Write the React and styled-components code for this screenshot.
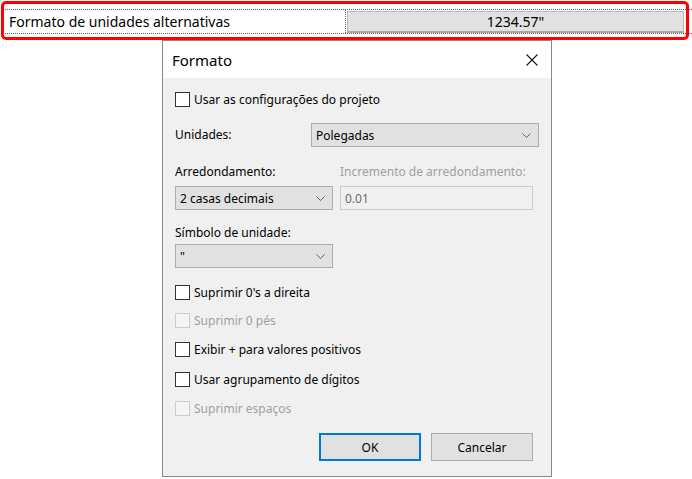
import React from 'react'
import styled, { createGlobalStyle } from 'styled-components'

const Global = createGlobalStyle`
  body {
    margin: 0;
    background: #ffffff;
    font-family: "Noto Sans", "Open Sans", sans-serif;
    color: #000000;
  }
`

const Top = styled.div`
  position: relative;
  height: 40px;
  padding-top: 9px;
  box-sizing: border-box;
`

const GridRow = styled.div`
  display: flex;
  margin-left: 5px;
  height: 25px;
  box-sizing: border-box;
  border-top: 1px dotted #606060;
  border-bottom: 1px dotted #606060;
`

const NameCell = styled.div`
  width: 341px;
  box-sizing: border-box;
  border-right: 1px dotted #606060;
  padding-left: 4px;
  display: flex;
  align-items: center;
  font-size: 14px;
  white-space: nowrap;
`

const ValueBox = styled.div`
  margin: 1px 0 0 1px;
  width: 337px;
  box-sizing: border-box;
  background: #e1e1e1;
  border: 1px solid #b8b8b8;
  border-bottom: 2px solid #a8a8a8;
  display: flex;
  align-items: center;
  justify-content: center;
  font-size: 14px;
`

const Highlight = styled.div`
  position: absolute;
  left: 1px;
  top: 1px;
  width: 688px;
  height: 39px;
  box-sizing: border-box;
  border: 3px solid #ff0000;
  border-radius: 5px;
  pointer-events: none;
`

const Dialog = styled.div`
  margin-left: 162px;
  width: 390px;
  height: 437px;
  box-sizing: border-box;
  border: 1px solid #868686;
  background: #f0f0f0;
  display: flex;
  flex-direction: column;
  font-size: 12px;
`

const TitleBar = styled.div`
  height: 37px;
  background: #ffffff;
  display: flex;
  align-items: center;
  justify-content: space-between;
  padding: 0 13px 0 9px;
  font-size: 15px;
`

const Body = styled.div`
  flex: 1;
  padding: 0 12px 0 12px;
  display: flex;
  flex-direction: column;
`

const Check = styled.label`
  display: flex;
  align-items: center;
  gap: 4px;
  height: 15px;
  margin-top: ${(p) => p.$top}px;
  color: ${(p) => (p.$disabled ? '#a0a0a0' : '#000000')};
  white-space: nowrap;
`

const Box = styled.span`
  width: 15px;
  height: 15px;
  box-sizing: border-box;
  border: 1px solid ${(p) => (p.$disabled ? '#cccccc' : '#333333')};
  background: ${(p) => (p.$disabled ? '#f4f4f4' : '#ffffff')};
  flex: none;
`

const FieldRow = styled.div`
  display: flex;
  align-items: center;
  justify-content: space-between;
  margin-top: ${(p) => p.$top}px;
`

const Columns = styled.div`
  display: grid;
  grid-template-columns: 158px 193px;
  column-gap: 7px;
  align-items: center;
  margin-top: ${(p) => p.$top}px;
`

const Label = styled.div`
  height: 16px;
  line-height: 16px;
  margin-top: ${(p) => p.$top || 0}px;
  color: ${(p) => (p.$disabled ? '#a0a0a0' : '#000000')};
  white-space: nowrap;
`

const Select = styled.div`
  width: ${(p) => p.$width}px;
  height: 24px;
  box-sizing: border-box;
  background: #e1e1e1;
  border: 1px solid #adadad;
  display: flex;
  align-items: center;
  justify-content: space-between;
  padding: 0 7px 0 4px;
  margin-top: ${(p) => p.$top || 0}px;
`

const Input = styled.div`
  height: 24px;
  box-sizing: border-box;
  background: #f0f0f0;
  border: 1px solid #cccccc;
  color: #6d6d6d;
  display: flex;
  align-items: center;
  padding-left: 4px;
`

const Buttons = styled.div`
  display: flex;
  justify-content: flex-end;
  gap: 10px;
  margin-top: 17px;
  padding-right: 6px;
`

const Button = styled.div`
  width: 102px;
  height: 28px;
  box-sizing: border-box;
  background: #e1e1e1;
  border: ${(p) => (p.$primary ? '2px solid #0078d7' : '1px solid #adadad')};
  display: flex;
  align-items: center;
  justify-content: center;
`

const Chevron = () => (
  <svg width="9" height="5" viewBox="0 0 9 5">
    <polyline points="0.5,0.5 4.5,4.5 8.5,0.5" fill="none" stroke="#606060" strokeWidth="1" />
  </svg>
)

const CloseIcon = () => (
  <svg width="12" height="12" viewBox="0 0 12 12">
    <path d="M0.5 0.5 L11.5 11.5 M11.5 0.5 L0.5 11.5" stroke="#1a1a1a" strokeWidth="1.1" fill="none" />
  </svg>
)

function CheckOption({ top, disabled, children }) {
  return (
    <Check $top={top} $disabled={disabled}>
      <Box $disabled={disabled} />
      {children}
    </Check>
  )
}

export default function App() {
  return (
    <>
      <Global />
      <Top>
        <GridRow>
          <NameCell>Formato de unidades alternativas</NameCell>
          <ValueBox>1234.57"</ValueBox>
        </GridRow>
        <Highlight />
      </Top>
      <Dialog>
        <TitleBar>
          <span>Formato</span>
          <CloseIcon />
        </TitleBar>
        <Body>
          <CheckOption top={14}>Usar as configurações do projeto</CheckOption>
          <FieldRow $top={16}>
            <Label>Unidades:</Label>
            <Select $width={228}>
              <span>Polegadas</span>
              <Chevron />
            </Select>
          </FieldRow>
          <Columns $top={17}>
            <Label>Arredondamento:</Label>
            <Label $disabled>Incremento de arredondamento:</Label>
          </Columns>
          <Columns $top={6}>
            <Select $width={158}>
              <span>2 casas decimais</span>
              <Chevron />
            </Select>
            <Input>0.01</Input>
          </Columns>
          <Label $top={15}>Símbolo de unidade:</Label>
          <Select $width={158} $top={3}>
            <span>"</span>
            <Chevron />
          </Select>
          <CheckOption top={17}>Suprimir 0's a direita</CheckOption>
          <CheckOption top={13} disabled>Suprimir 0 pés</CheckOption>
          <CheckOption top={14}>Exibir + para valores positivos</CheckOption>
          <CheckOption top={15}>Usar agrupamento de dígitos</CheckOption>
          <CheckOption top={14} disabled>Suprimir espaços</CheckOption>
          <Buttons>
            <Button $primary>OK</Button>
            <Button>Cancelar</Button>
          </Buttons>
        </Body>
      </Dialog>
    </>
  )
}
